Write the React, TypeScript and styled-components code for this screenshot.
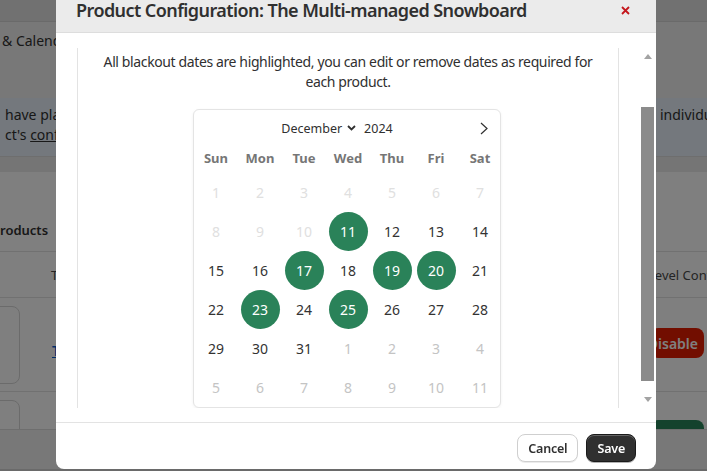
import React from "react";
import styled, { createGlobalStyle } from "styled-components";

const Global = createGlobalStyle`
  html, body { margin: 0; padding: 0; }
  body {
    width: 707px; height: 471px; overflow: hidden;
    font-family: "Noto Sans", "Open Sans", sans-serif;
    color: #303030;
    background: #f1f1f1;
  }
  * { box-sizing: border-box; }
`;

/* ---------- background page ---------- */
const Page = styled.div`
  width: 707px;
  height: 471px;
  display: flex;
  flex-direction: column;
  font-size: 13px;
  color: #303030;
`;
const TopBar = styled.div`
  height: 22px;
  background: #e3e3e3;
  border-bottom: 1px solid #d4d4d4;
`;
const PageTitle = styled.div`
  height: 76px;
  padding: 9px 0 0 2px;
  line-height: 20px;
  font-size: 14px;
`;
const Banner = styled.div`
  height: 58px;
  background: #e8f1fb;
  display: flex;
  justify-content: space-between;
  padding: 7px 0 0 5px;
  line-height: 20px;
  font-size: 14px;
`;
const BannerLeft = styled.div``;
const BannerRight = styled.div`
  padding-left: 2px;
  width: 49px;
  white-space: nowrap;
  overflow: hidden;
`;
const Underline = styled.span`
  text-decoration: underline;
`;
const Strip = styled.div`
  height: 16px;
  background: #ebebeb;
  border-top: 1px solid #dcdcdc;
`;
const Card = styled.div`
  height: 258px;
  flex: none;
  background: #ffffff;
  display: flex;
  flex-direction: column;
  overflow: hidden;
  border-bottom: 1px solid #dcdcdc;
`;
const CardTitle = styled.div`
  height: 80px;
  flex: none;
  display: flex;
  align-items: flex-end;
  padding-bottom: 12px;
  border-bottom: 1px solid #e3e3e3;
  font-weight: 600;
  font-size: 13px;
`;
const HeadRow = styled.div`
  height: 46px;
  flex: none;
  display: flex;
  align-items: center;
  justify-content: space-between;
  padding-left: 51px;
  border-bottom: 1px solid #e3e3e3;
  color: #4a4a4a;
  font-size: 13px;
`;
const RightClip = styled.div`
  width: 59px;
  overflow: hidden;
  white-space: nowrap;
`;
const ProductRow = styled.div<{ $h: number }>`
  height: ${(p) => p.$h}px;
  flex: none;
  display: flex;
  align-items: flex-start;
  justify-content: space-between;
  padding-top: 8px;
  border-bottom: 1px solid #e3e3e3;
`;
const Thumb = styled.div`
  width: 30px;
  height: 78px;
  flex: none;
  margin-left: -10px;
  border: 1px solid #d6d6d6;
  border-radius: 8px;
`;
const ProductLink = styled.a`
  margin: 35px 0 0 32px;
  color: #005bd3;
  text-decoration: underline;
  font-weight: 600;
  font-size: 14px;
  white-space: nowrap;
`;
const RowMid = styled.div`
  flex: 1;
  display: flex;
  overflow: hidden;
`;
const ActionBtn = styled.div<{ $bg: string; $top: number }>`
  margin: ${(p) => p.$top}px 3px 0 0;
  width: 54px;
  height: 30px;
  flex: none;
  border-radius: 8px;
  background: ${(p) => p.$bg};
  color: #fff;
  font-weight: 600;
  font-size: 14px;
  display: flex;
  align-items: center;
  justify-content: flex-end;
  padding-right: 6px;
  overflow: hidden;
`;
const BottomLine = styled.div`
  position: fixed;
  left: 0;
  right: 0;
  bottom: 0;
  height: 2px;
  background: #6a6a6a;
`;

/* ---------- overlay + modal ---------- */
const Overlay = styled.div`
  position: fixed;
  inset: 0;
  background: rgba(0, 0, 0, 0.5);
`;
const Modal = styled.div`
  position: fixed;
  left: 56px;
  top: -16px;
  width: 600px;
  height: 485px;
  background: #fff;
  border-radius: 8px;
  display: flex;
  flex-direction: column;
  overflow: hidden;
`;
const Header = styled.div`
  height: 49px;
  flex: none;
  padding: 4px 26px 0 20px;
  background: #ebebeb;
  border-bottom: 1px solid #dddddd;
  display: flex;
  align-items: center;
  justify-content: space-between;
`;
const Title = styled.h2`
  margin: 0;
  font-size: 18px;
  font-weight: 600;
  color: #303030;
  letter-spacing: -0.57px;
`;
const CloseBtn = styled.button`
  border: 0;
  background: none;
  padding: 0;
  width: 9px;
  height: 9px;
  display: flex;
`;
const Body = styled.div`
  flex: 1;
  padding: 15px 1px 14px 21px;
  display: flex;
  min-height: 0;
`;
const Pane = styled.div`
  width: 542px;
  border-left: 1px solid #e3e3e3;
  border-right: 1px solid #e3e3e3;
  padding-top: 4px;
  overflow: hidden;
`;
const Intro = styled.p`
  margin: 0 auto;
  width: 500px;
  text-align: center;
  font-size: 14px;
  line-height: 20px;
  letter-spacing: -0.38px;
  color: #303030;
`;
const Spacer = styled.div`
  flex: 1;
`;
const Scrollbar = styled.div`
  width: 15px;
  display: flex;
  flex-direction: column;
  align-items: center;
`;
const ScrollBtn = styled.div`
  height: 17px;
  flex: none;
  display: flex;
  align-items: center;
  justify-content: center;
`;
const Track = styled.div`
  flex: 1;
  width: 100%;
  padding: 42px 1px 0 1px;
`;
const ScrollThumb = styled.div`
  height: 274px;
  background: #8b8b8b;
`;
const Footer = styled.div`
  height: 47px;
  flex: none;
  border-top: 1px solid #e3e3e3;
  display: flex;
  justify-content: flex-end;
  align-items: flex-start;
  gap: 8px;
  padding: 11px 20px 0 0;
`;
const Button = styled.button<{ $primary?: boolean }>`
  height: 28px;
  padding: 0 10px;
  border-radius: 8px;
  font-family: inherit;
  font-size: 12.5px;
  font-weight: 600;
  letter-spacing: -0.2px;
  cursor: pointer;
  border: 1px solid ${(p) => (p.$primary ? "#1a1a1a" : "#cfcfcf")};
  background: ${(p) => (p.$primary ? "#303030" : "#ffffff")};
  color: ${(p) => (p.$primary ? "#ffffff" : "#303030")};
  box-shadow: ${(p) =>
    p.$primary
      ? "inset 0 1px 0 rgba(255,255,255,0.25), 0 1px 0 rgba(0,0,0,0.3)"
      : "0 1px 0 rgba(0,0,0,0.08)"};
`;

/* ---------- calendar ---------- */
const CalCard = styled.div`
  width: 308px;
  margin: 17px auto 0;
  border: 1px solid #e4e4e4;
  border-radius: 6px;
  box-shadow: 0 1px 3px rgba(0, 0, 0, 0.06);
  background: #fff;
  position: relative;
  left: -1px;
`;
const CalHead = styled.div`
  height: 22px;
  margin-top: 7px;
  padding-right: 20px;
  display: flex;
  align-items: center;
  justify-content: center;
  position: relative;
  font-size: 12.5px;
  color: #303030;
`;
const MonthSelect = styled.div`
  display: flex;
  align-items: center;
  gap: 5px;
  margin-right: 8px;
`;
const NextBtn = styled.div`
  position: absolute;
  right: 12px;
  top: 5px;
  display: flex;
`;
const Grid = styled.div`
  display: grid;
  grid-template-columns: repeat(7, 44px);
`;
const WeekDay = styled.div`
  height: 30px;
  margin-top: 4px;
  display: flex;
  align-items: center;
  justify-content: center;
  font-size: 13px;
  font-weight: 700;
  color: #767676;
`;
const DayCell = styled.div`
  height: 39px;
  display: flex;
  align-items: center;
  justify-content: center;
`;
const Day = styled.div<{ $kind: "past" | "cur" | "next" | "sel" }>`
  width: 39px;
  height: 39px;
  border-radius: 50%;
  display: flex;
  align-items: center;
  justify-content: center;
  font-size: 14px;
  background: ${(p) => (p.$kind === "sel" ? "#2a8259" : "transparent")};
  color: ${(p) =>
    p.$kind === "sel"
      ? "#ffffff"
      : p.$kind === "past"
      ? "#e0e0e0"
      : p.$kind === "next"
      ? "#c4c4c4"
      : "#333333"};
`;

const selected = new Set([11, 17, 19, 20, 23, 25]);
type Cell = { n: number; kind: "past" | "cur" | "next" | "sel" };
const cells: Cell[] = [];
for (let d = 1; d <= 31; d++) {
  cells.push({ n: d, kind: selected.has(d) ? "sel" : d <= 10 ? "past" : "cur" });
}
for (let d = 1; d <= 11; d++) cells.push({ n: d, kind: "next" });

const weekDays = ["Sun", "Mon", "Tue", "Wed", "Thu", "Fri", "Sat"];

const Tri = ({ up }: { up?: boolean }) => (
  <svg width="8" height="5" viewBox="0 0 8 5">
    <polygon points={up ? "0,5 8,5 4,0" : "0,0 8,0 4,5"} fill="#a3a3a3" />
  </svg>
);

export default function App() {
  return (
    <>
      <Global />
      <Page>
        <TopBar />
        <PageTitle>&amp; Calendar</PageTitle>
        <Banner>
          <BannerLeft>
            have placed
            <br />
            ct's <Underline>configuration</Underline>
          </BannerLeft>
          <BannerRight>individual</BannerRight>
        </Banner>
        <Strip />
        <Card>
          <CardTitle>roducts</CardTitle>
          <HeadRow>
            <span>Title</span>
            <RightClip>Level Configuration</RightClip>
          </HeadRow>
          <ProductRow $h={94}>
            <Thumb />
            <RowMid>
              <ProductLink>The Multi-managed Snowboard</ProductLink>
            </RowMid>
            <ActionBtn $bg="#e51c00" $top={22}>
              Disable
            </ActionBtn>
          </ProductRow>
          <ProductRow $h={38}>
            <Thumb />
            <RowMid />
            <ActionBtn $bg="#29845a" $top={20}>
              Enable
            </ActionBtn>
          </ProductRow>
        </Card>
      </Page>
      <Overlay />
      <Modal>
        <Header>
          <Title>Product Configuration: The Multi-managed Snowboard</Title>
          <CloseBtn aria-label="Close">
            <svg width="9" height="9" viewBox="0 0 9 9">
              <path d="M1 1 L8 8 M8 1 L1 8" stroke="#c4161c" strokeWidth="1.8" />
            </svg>
          </CloseBtn>
        </Header>
        <Body>
          <Pane>
            <Intro>
              All blackout dates are highlighted, you can edit or remove dates as required for each
              product.
            </Intro>
            <CalCard>
              <CalHead>
                <MonthSelect>
                  <span>December</span>
                  <svg width="9" height="6" viewBox="0 0 9 6">
                    <polyline points="1,1 4.5,4.5 8,1" fill="none" stroke="#303030" strokeWidth="1.8" />
                  </svg>
                </MonthSelect>
                <span>2024</span>
                <NextBtn>
                  <svg width="8" height="13" viewBox="0 0 8 13">
                    <polyline points="1,1 7,6.5 1,12" fill="none" stroke="#303030" strokeWidth="1.2" />
                  </svg>
                </NextBtn>
              </CalHead>
              <Grid>
                {weekDays.map((w) => (
                  <WeekDay key={w}>{w}</WeekDay>
                ))}
                {cells.map((c, i) => (
                  <DayCell key={i}>
                    <Day $kind={c.kind}>{c.n}</Day>
                  </DayCell>
                ))}
              </Grid>
            </CalCard>
          </Pane>
          <Spacer />
          <Scrollbar>
            <ScrollBtn>
              <Tri up />
            </ScrollBtn>
            <Track>
              <ScrollThumb />
            </Track>
            <ScrollBtn>
              <Tri />
            </ScrollBtn>
          </Scrollbar>
        </Body>
        <Footer>
          <Button>Cancel</Button>
          <Button $primary>Save</Button>
        </Footer>
      </Modal>
      <BottomLine />
    </>
  );
}
